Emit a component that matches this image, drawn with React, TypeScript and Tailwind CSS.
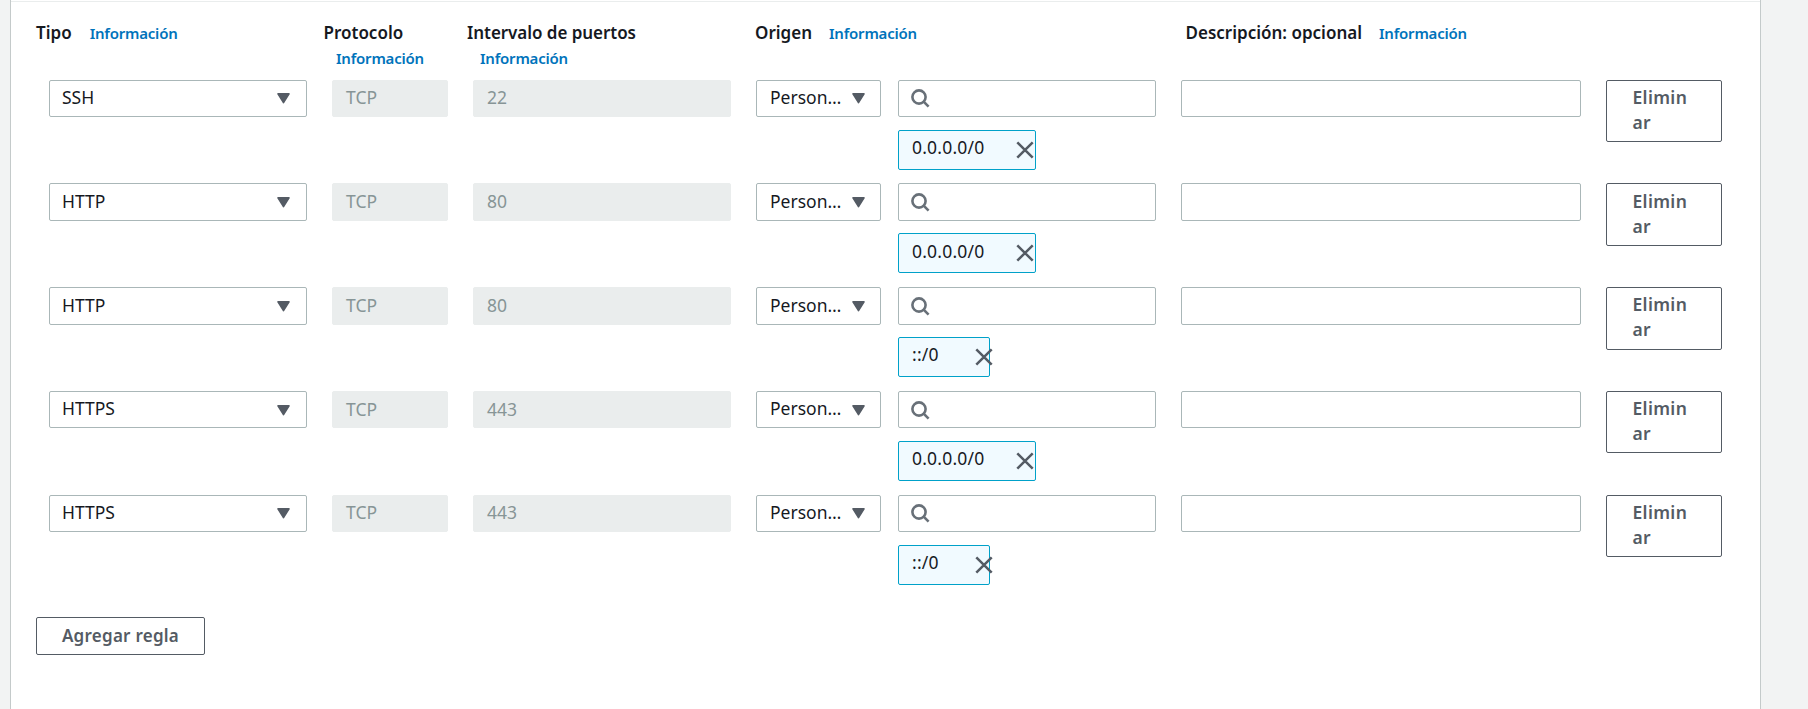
import React from "react";

type Rule = {
  type: string;
  port: string;
  cidr: string;
  row: string;
  box: string;
  text: string;
  disabledText: string;
  icon: string;
  tag: string;
  tagText: string;
  button: string;
};

const rules: Rule[] = [
  { type: "SSH", port: "22", cidr: "0.0.0.0/0", row: "h-[103px]", box: "h-[37px]", text: "pt-[4px]", disabledText: "pt-[4px]", icon: "pt-0", tag: "mt-[13px] w-[138px]", tagText: "pt-[4px]", button: "h-[62px] pt-[4px]" },
  { type: "HTTP", port: "80", cidr: "0.0.0.0/0", row: "h-[104px]", box: "h-[38px]", text: "pt-[5px]", disabledText: "pt-[5px]", icon: "pt-0", tag: "mt-[12px] w-[138px]", tagText: "pt-[5px]", button: "h-[63px] pt-[5px]" },
  { type: "HTTP", port: "80", cidr: "::/0", row: "h-[104px]", box: "h-[38px]", text: "pt-[5px]", disabledText: "pt-[5px]", icon: "pt-0", tag: "mt-[12px] w-[92px]", tagText: "pt-[4px]", button: "h-[63px] pt-[4px]" },
  { type: "HTTPS", port: "443", cidr: "0.0.0.0/0", row: "h-[104px]", box: "h-[37px]", text: "pt-[4px]", disabledText: "pt-[5px]", icon: "pt-px", tag: "mt-[13px] w-[138px]", tagText: "pt-[4px]", button: "h-[62px] pt-[4px]" },
  { type: "HTTPS", port: "443", cidr: "::/0", row: "h-[104px]", box: "h-[37px]", text: "pt-[4px]", disabledText: "pt-[4px]", icon: "pt-0", tag: "mt-[13px] w-[92px]", tagText: "pt-[4px]", button: "h-[62px] pt-[4px]" },
];

function Caret() {
  return (
    <svg className="mt-[8px] h-[11px] w-[13px] shrink-0" viewBox="0 0 13 11">
      <path d="M1 0.9h11L6.5 9.6z" fill="#545b64" stroke="#545b64" strokeWidth="1.6" strokeLinejoin="round" />
    </svg>
  );
}

function SearchIcon() {
  return (
    <svg className="mt-[4px] h-[20px] w-[20px]" viewBox="0 0 20 20" fill="none" stroke="#687078" strokeWidth="2.6">
      <circle cx="9" cy="8" r="6.6" />
      <path d="M13.4 12.4l5.2 5.2" />
    </svg>
  );
}

function CloseIcon() {
  return (
    <svg className="h-[18px] w-[18px] shrink-0" viewBox="0 0 18 18" fill="none" stroke="#545b64" strokeWidth="2.5">
      <path d="M1.3 1.3l15.4 15.4M16.7 1.3L1.3 16.7" />
    </svg>
  );
}

function Info({ className = "" }: { className?: string }) {
  return (
    <a className={`text-[15px] font-semibold tracking-[-0.014em] text-[#0073bb] ${className}`}>Información</a>
  );
}

function Select({ value, className, text, icon }: { value: string; className: string; text: string; icon: string }) {
  return (
    <div className={`flex items-start justify-between rounded-[2px] border border-[#aab7b8] bg-white ${className} ${text}`}>
      <span className="whitespace-nowrap">{value}</span>
      <span className={`flex shrink-0 ${icon}`}>
        <Caret />
      </span>
    </div>
  );
}

function DisabledInput({ value, className }: { value: string; className: string }) {
  return (
    <div className={`ml-[25px] rounded-[2px] border border-[#eaeded] bg-[#eaeded] pl-[13px] text-[#879596] ${className}`}>
      {value}
    </div>
  );
}

function RuleRow({ rule }: { rule: Rule }) {
  const short = rule.cidr.length < 6;
  return (
    <div className={`flex items-start pl-[13px] text-[17.5px] ${rule.row}`}>
      <Select value={rule.type} text={rule.text} icon={rule.icon} className={`w-[258px] pr-[16.5px] pl-[12px] ${rule.box}`} />
      <DisabledInput value="TCP" className={`w-[116px] ${rule.box} ${rule.disabledText}`} />
      <DisabledInput value={rule.port} className={`w-[258px] ${rule.box} ${rule.disabledText}`} />
      <Select value="Person…" text={rule.text} icon={rule.icon} className={`ml-[25px] w-[125px] pr-[15.5px] pl-[13px] ${rule.box}`} />
      <div className="ml-[17px] w-[258px]">
        <div className={`rounded-[2px] border border-[#aab7b8] bg-white pl-[11px] ${rule.box} ${rule.text}`}>
          <div className={rule.icon}>
            <SearchIcon />
          </div>
        </div>
        <div className={`flex h-[40px] items-start justify-between rounded-[2px] border border-[#00a1c9] bg-[#f1faff] pl-[13px] ${rule.tag}`}>
          <span className={`tracking-[0.012em] ${rule.tagText}`}>{rule.cidr}</span>
          <span className={`pt-[10px] ${short ? "-mr-[4px]" : "mr-px"}`}>
            <CloseIcon />
          </span>
        </div>
      </div>
      <div className={`ml-[25px] w-[400px] rounded-[2px] border border-[#aab7b8] bg-white ${rule.box}`} />
      <button
        className={`ml-[25px] flex w-[116px] items-start rounded-[2px] border border-[#545b64] bg-white pl-[25.5px] text-left font-semibold tracking-[0.02em] text-[#545b64] ${rule.button}`}
      >
        <span>
          Elimin
          <br />
          ar
        </span>
      </button>
    </div>
  );
}

export default function App() {
  return (
    <div className="flex h-[709px] w-[1808px] overflow-hidden bg-[#f2f3f3] pl-[10px] font-['Noto_Sans',sans-serif] text-[17px] leading-[25px] text-[#16191f]">
      <main className="w-[1751px] border-x border-[#c4caca] bg-white">
        <div className="h-[2px] border-b border-[#eaeded]" />
        <div className="pl-[25px]">
          <header className="flex h-[78px] pt-[18px] font-semibold">
            <div className="w-[287.5px]">
              Tipo
              <Info className="ml-[18px]" />
            </div>
            <div className="flex w-[143.5px] flex-col">
              Protocolo
              <Info className="mt-px ml-[12.5px]" />
            </div>
            <div className="flex w-[288px] flex-col">
              <span className="tracking-[-0.003em]">Intervalo de puertos</span>
              <Info className="mt-px ml-[13px]" />
            </div>
            <div className="w-[430.5px]">
              Origen
              <Info className="ml-[17px]" />
            </div>
            <div>
              Descripción: opcional
              <Info className="ml-[17px]" />
            </div>
          </header>
          {rules.map((rule, i) => (
            <RuleRow key={i} rule={rule} />
          ))}
          <button className="mt-[18px] h-[38px] w-[169px] rounded-[2px] border border-[#545b64] bg-white pb-[2px] text-center font-semibold tracking-[0.015em] text-[#545b64]">
            Agregar regla
          </button>
        </div>
      </main>
    </div>
  );
}
